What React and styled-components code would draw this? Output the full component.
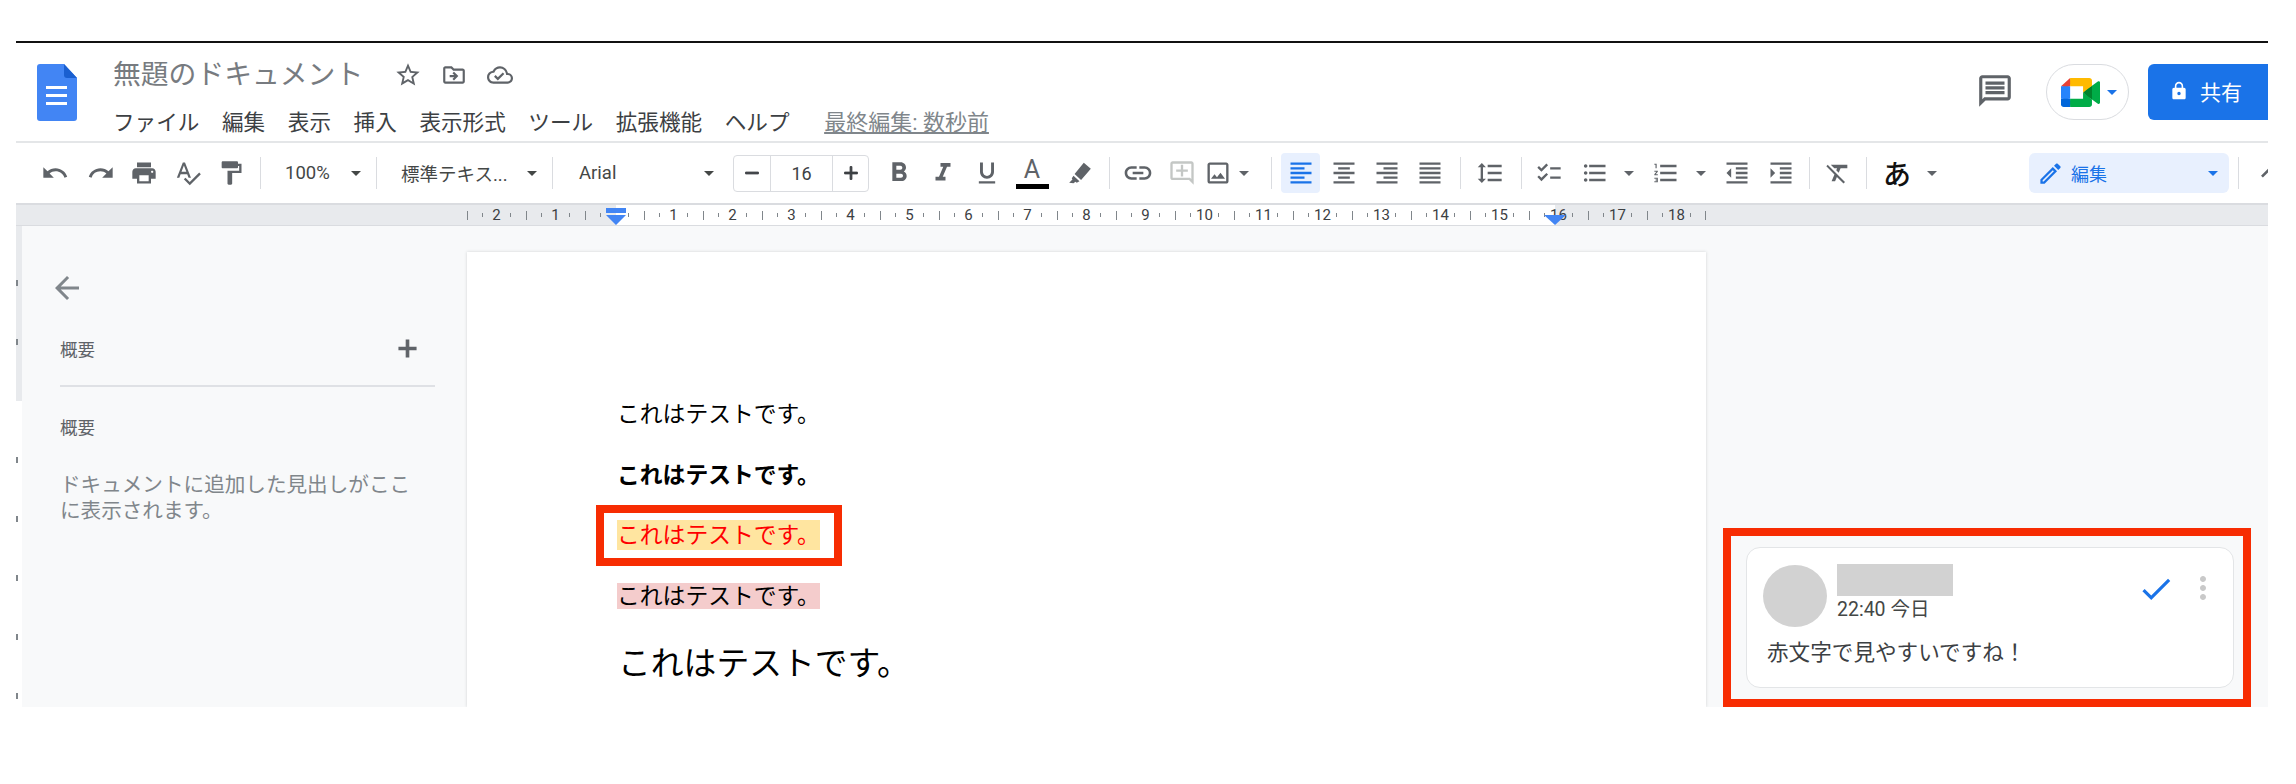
import React from 'react';
import styled, {createGlobalStyle} from 'styled-components';
import {
  MdUndo, MdRedo, MdPrint, MdSpellcheck, MdFormatPaint, MdArrowDropDown, MdRemove, MdAdd,
  MdFormatBold, MdFormatItalic, MdFormatUnderlined, MdLink, MdOutlineAddComment,
  MdOutlineImage, MdFormatAlignLeft, MdFormatAlignCenter, MdFormatAlignRight, MdFormatAlignJustify,
  MdFormatLineSpacing, MdChecklist, MdFormatListBulleted, MdFormatListNumbered,
  MdFormatIndentDecrease, MdFormatIndentIncrease, MdFormatClear, MdOutlineEdit, MdExpandLess,
  MdStarBorder, MdOutlineDriveFileMove, MdOutlineCloudDone, MdOutlineMessage, MdLock,
  MdArrowBack, MdCheck, MdMoreVert,
} from 'react-icons/md';

const UI_FONT = `Roboto, "Noto Sans CJK JP", sans-serif`;
const DOC_FONT = `"Liberation Sans", "Noto Sans CJK JP", sans-serif`;
const ANNOTATION = '#f72c02';

const GlobalStyle = createGlobalStyle`
  html, body {
    margin: 0;
    background: #fff;
    font-family: ${UI_FONT};
  }
  svg {
    flex: none;
  }
`;

const Shell = styled.div`
  margin: 41px 0 0 16px;
  width: 2252px;
  height: 666px;
  border-top: 2px solid #111;
  box-sizing: border-box;
  overflow: hidden;
  display: flex;
  flex-direction: column;
`;

const Header = styled.header`
  height: 100px;
  flex: none;
  display: flex;
  align-items: flex-start;
  padding-left: 21px;
  border-bottom: 2px solid #e4e6e8;
  box-sizing: border-box;
`;

const LogoWrap = styled.div`
  margin-top: 21px;
  width: 40px;
  height: 57px;
  flex: none;
`;

const TitleColumn = styled.div`
  margin-left: 36px;
  padding-top: 16px;
  display: flex;
  flex-direction: column;
`;

const TitleRow = styled.div`
  height: 32px;
  display: flex;
  align-items: center;
  color: #80868b;
`;

const Title = styled.span`
  font-size: 27.8px;
  line-height: 32px;
  color: #777b80;
  margin-right: 22px;
`;

const TitleIcon = styled.span`
  display: flex;
  width: 46px;
  justify-content: center;
  color: #5f6368;
`;

const Menu = styled.nav`
  margin-top: 14px;
  height: 30px;
  display: flex;
  align-items: center;
  gap: 22.6px;
  font-size: 21.6px;
  color: #3c4043;
`;

const LastEdit = styled.span`
  margin-left: 12px;
  font-size: 22px;
  color: #80868b;
  text-decoration: underline;
`;

const HeaderRight = styled.div`
  margin-left: auto;
  padding-top: 21px;
  display: flex;
  align-items: flex-start;
`;

const CommentsIcon = styled.span`
  display: flex;
  margin-top: 8px;
  margin-right: 32px;
  color: #5f6368;
`;

const MeetPill = styled.div`
  width: 83px;
  height: 56px;
  border: 1.5px solid #dadce0;
  border-radius: 28px;
  box-sizing: border-box;
  display: flex;
  align-items: center;
  padding-left: 14px;
  color: #1a73e8;
`;

const ShareButton = styled.button`
  margin-left: 19px;
  width: 120px;
  height: 56px;
  border: 0;
  border-radius: 6px 0 0 6px;
  background: #1a73e8;
  color: #fff;
  font: 21px ${UI_FONT};
  display: flex;
  align-items: center;
  padding: 0 0 2px 21px;
  gap: 11px;
`;

const Toolbar = styled.div`
  height: 60px;
  flex: none;
  display: flex;
  align-items: center;
  padding-left: 16px;
  color: #5f6368;
  overflow: hidden;
`;

const Tool = styled.span`
  flex: none;
  width: ${(p) => p.$w}px;
  height: 40px;
  display: flex;
  align-items: center;
  justify-content: center;
  color: ${(p) => p.$color || 'inherit'};
  background: ${(p) => (p.$active ? '#e8f0fe' : 'transparent')};
  border-radius: 4px;
  margin-left: ${(p) => p.$ml || 0}px;
`;

const Sep = styled.span`
  flex: none;
  width: 1px;
  height: 32px;
  background: #dadce0;
  margin-left: ${(p) => p.$ml || 0}px;
`;

const Select = styled.span`
  flex: none;
  width: ${(p) => p.$w}px;
  height: 40px;
  box-sizing: border-box;
  padding: 0 ${(p) => p.$pr}px 0 ${(p) => p.$pl}px;
  display: flex;
  align-items: center;
  justify-content: space-between;
  font-size: 18.5px;
  color: #444746;
`;

const SizeBox = styled.span`
  flex: none;
  width: 136px;
  height: 37px;
  box-sizing: border-box;
  border: 1px solid #dadce0;
  border-radius: 4px;
  display: grid;
  grid-template-columns: 36px 1fr 36px;
  margin-right: 8px;
  font-size: 18px;
  color: #3c4043;
`;

const SizeCell = styled.span`
  display: flex;
  align-items: center;
  justify-content: center;
  & + & {
    border-left: 1px solid #dadce0;
  }
  & path:not([fill='none']) {
    stroke: currentColor;
    stroke-width: 1px;
  }
`;

const ColorLetter = styled.span`
  display: flex;
  flex-direction: column;
  align-items: center;
  font-size: 25px;
  line-height: 26px;
  color: #5f6368;
  &::after {
    content: '';
    width: 33px;
    height: 5px;
    background: #000;
    margin-top: 1px;
  }
`;

const Kana = styled.span`
  font-size: 28px;
  font-weight: 500;
  color: #111;
`;

const EditButton = styled.span`
  flex: none;
  margin-left: 92px;
  width: 200px;
  height: 40px;
  box-sizing: border-box;
  padding: 0 4px 0 8px;
  display: flex;
  align-items: center;
  background: #e8f0fe;
  border-radius: 6px;
  color: #1a73e8;
  font-size: 18px;
  gap: 7px;
  & > svg:last-child {
    margin-left: auto;
  }
`;

const Ruler = styled.div`
  position: relative;
  height: 23px;
  flex: none;
  background: #e8eaed;
  border-top: 2px solid #dadce0;
  border-bottom: 1px solid #dadce0;
  box-sizing: border-box;
  padding-left: 451px;
`;

const RulerTrack = styled.div`
  width: 1239px;
  height: 100%;
  display: flex;
  background: linear-gradient(90deg, transparent 149px, #fff 149px, #fff 1088px, transparent 1088px);
`;

const RulerCell = styled.div`
  flex: 1;
  display: flex;
  align-items: center;
  justify-content: space-between;
  font-size: 15px;
  color: #3c4043;
`;

const RulerTick = styled.span`
  width: 1px;
  height: ${(p) => (p.$tall ? 9 : 4)}px;
  background: #80868b;
`;

const RulerEnd = styled(RulerTick)`
  visibility: ${(p) => (p.$show ? 'visible' : 'hidden')};
`;

const RulerNum = styled.span`
  width: 0;
  display: flex;
  justify-content: center;
`;

const RulerMarker = styled.svg`
  position: absolute;
  top: ${(p) => p.$top}px;
  left: ${(p) => p.$left}px;
`;

const Main = styled.div`
  flex: 1;
  min-height: 0;
  display: flex;
  background: #f8f9fa;
`;

const SideRuler = styled.div`
  width: 6px;
  flex: none;
  padding-top: 27px;
  box-sizing: border-box;
  background: linear-gradient(180deg, #e8eaed 175px, #fff 175px);
`;

const SideCell = styled.div`
  height: 59px;
  display: flex;
  align-items: center;
  &::before {
    content: '';
    width: 2px;
    height: 6px;
    background: ${(p) => (p.$off ? 'transparent' : '#80868b')};
  }
`;

const Sidebar = styled.aside`
  width: 445px;
  flex: none;
  box-sizing: border-box;
  padding: 44px 32px 0 38px;
  color: #80868b;
`;

const BackIcon = styled.span`
  display: flex;
  margin-left: -11px;
  height: 36px;
`;

const OutlineHead = styled.div`
  margin-top: 30px;
  height: 24px;
  display: flex;
  align-items: center;
  justify-content: space-between;
  padding-right: 13px;
  font-size: 17.5px;
  color: #5f6368;
  & path:not([fill='none']) {
    stroke: currentColor;
    stroke-width: 1px;
  }
`;

const OutlineRule = styled.div`
  margin-top: 25px;
  height: 2px;
  background: #dfe1e5;
`;

const OutlineLabel = styled.div`
  margin-top: 29px;
  font-size: 17.5px;
  line-height: 24px;
  color: #5f6368;
`;

const OutlineHint = styled.p`
  margin: 32px 0 0;
  width: 360px;
  font-size: 20.6px;
  line-height: 26px;
  color: #80868b;
`;

const Page = styled.main`
  width: 1239px;
  flex: none;
  margin-top: 26px;
  background: #fff;
  box-shadow: 0 0 3px rgba(60, 64, 67, 0.2);
  box-sizing: border-box;
  padding: 145px 0 0 150px;
  font-family: ${DOC_FONT};
  color: #000;
`;

const DocLine = styled.p`
  margin: 0 0 ${(p) => p.$gap || 31}px;
  height: 30px;
  display: flex;
  align-items: center;
  font-size: 22.8px;
  font-weight: ${(p) => (p.$bold ? 700 : 400)};
`;

const LargeLine = styled.p`
  margin: 28px 0 0 1px;
  font-size: 32.8px;
  line-height: 44px;
`;

const Mark = styled.span`
  position: relative;
  line-height: ${(p) => p.$h}px;
  color: ${(p) => p.$color || 'inherit'};
  background: ${(p) => p.$bg};
  ${(p) =>
    p.$callout &&
    `&::after {
      content: '';
      position: absolute;
      inset: -15px -22px -16px -21px;
      border: 8px solid ${ANNOTATION};
    }`}
`;

const RightRail = styled.div`
  flex: 1;
  padding: 302px 17px 0;
  min-width: 0;
`;

const Callout = styled.div`
  width: 528px;
  height: 179px;
  box-sizing: border-box;
  border: 8px solid ${ANNOTATION};
  padding: 11px 9px 11px 15px;
`;

const Card = styled.div`
  height: 100%;
  box-sizing: border-box;
  background: #fff;
  border: 1px solid #e3e5e7;
  border-radius: 14px;
  padding: 17px 0 0 16px;
`;

const CardHead = styled.div`
  display: flex;
  align-items: flex-start;
`;

const Avatar = styled.div`
  width: 64px;
  height: 62px;
  border-radius: 50%;
  background: #d2d2d2;
  flex: none;
`;

const Author = styled.div`
  margin-left: 10px;
  margin-top: -1px;
`;

const Redacted = styled.div`
  width: 116px;
  height: 32px;
  background: #d2d2d2;
`;

const Time = styled.div`
  margin-top: 2px;
  font-size: 19.5px;
  line-height: 24px;
  color: #444746;
`;

const CardActions = styled.div`
  margin-left: auto;
  padding: 5px 12px 0 0;
  display: flex;
  gap: 10px;
`;

const CardText = styled.p`
  margin: 11px 0 0 4px;
  font-size: 21.6px;
  line-height: 30px;
  color: #3c4043;
`;

const DocsLogo = () => (
  <svg width="40" height="57" viewBox="0 0 40 57">
    <path fill="#4285f4" d="M3 0h24l13 14v40a3 3 0 0 1-3 3H3a3 3 0 0 1-3-3V3a3 3 0 0 1 3-3z" />
    <path fill="#1a5fd0" d="M27 0l13 14H30a3 3 0 0 1-3-3z" />
    <path fill="#fff" d="M9 22h21v3H9zM9 30h21v3H9zM9 38h21v3H9z" />
  </svg>
);

const MeetLogo = () => (
  <svg width="39" height="29" viewBox="0 0 87.5 72" preserveAspectRatio="none">
    <path fill="#00832d" d="M49.5 36l8.53 9.75 11.47 7.33 2-17.02-2-16.64-11.69 6.44z" />
    <path fill="#0066da" d="M0 51.5V66c0 3.315 2.685 6 6 6h14.5l3-10.96-3-9.54-9.95-3z" />
    <path fill="#e94235" d="M20.5 0L0 20.5l10.55 3 9.95-3 2.95-9.41z" />
    <path fill="#2684fc" d="M20.5 20.5H0v31h20.5z" />
    <path fill="#00ac47" d="M82.6 8.68L69.5 19.42v33.66l13.16 10.79c1.97 1.54 4.85.135 4.85-2.37V11c0-2.535-2.945-3.925-4.91-2.32zM49.5 36v15.5h-29V72h43c3.315 0 6-2.685 6-6V53.08z" />
    <path fill="#ffba00" d="M63.5 0h-43v20.5h29V36l20-16.57V6c0-3.315-2.685-6-6-6z" />
  </svg>
);

const MarkerIcon = () => (
  <svg width="26" height="26" viewBox="0 0 24 24" fill="currentColor">
    <path d="M15.5 2.5L22 8l-9 10.5-6-5.5zM6 14.5l5.5 5-2.5 1.5-1.2-1L6 21.5 2 21l3-3-.6-1.2z" />
  </svg>
);

const MENU = ['ファイル', '編集', '表示', '挿入', '表示形式', 'ツール', '拡張機能', 'ヘルプ'];
const RULER_NUMBERS = [2, 1, null, 1, 2, 3, 4, 5, 6, 7, 8, 9, 10, 11, 12, 13, 14, 15, 16, 17, 18];
const SIDE_TICKS = [false, false, true, false, false, false, false, false];
const ICON = 28;
const CARET = 24;

const AppHeader = () => (
  <Header>
    <LogoWrap>
      <DocsLogo />
    </LogoWrap>
    <TitleColumn>
      <TitleRow>
        <Title>無題のドキュメント</Title>
        <TitleIcon>
          <MdStarBorder size={28} />
        </TitleIcon>
        <TitleIcon>
          <MdOutlineDriveFileMove size={26} />
        </TitleIcon>
        <TitleIcon>
          <MdOutlineCloudDone size={26} />
        </TitleIcon>
      </TitleRow>
      <Menu>
        {MENU.map((item) => (
          <span key={item}>{item}</span>
        ))}
        <LastEdit>最終編集: 数秒前</LastEdit>
      </Menu>
    </TitleColumn>
    <HeaderRight>
      <CommentsIcon>
        <MdOutlineMessage size={38} />
      </CommentsIcon>
      <MeetPill>
        <MeetLogo />
        <MdArrowDropDown size={24} />
      </MeetPill>
      <ShareButton>
        <MdLock size={20} />
        共有
      </ShareButton>
    </HeaderRight>
  </Header>
);

const AppToolbar = () => (
  <Toolbar>
    <Tool $w={46}><MdUndo size={ICON} /></Tool>
    <Tool $w={46}><MdRedo size={ICON} /></Tool>
    <Tool $w={40}><MdPrint size={ICON} /></Tool>
    <Tool $w={48}><MdSpellcheck size={ICON} /></Tool>
    <Tool $w={38}><MdFormatPaint size={ICON} /></Tool>
    <Sep $ml={10} />
    <Select $w={115} $pl={24} $pr={8}>100%<MdArrowDropDown size={CARET} /></Select>
    <Sep />
    <Select $w={175} $pl={24} $pr={8}>標準テキス...<MdArrowDropDown size={CARET} /></Select>
    <Sep />
    <Select $w={180} $pl={26} $pr={12}>Arial<MdArrowDropDown size={CARET} /></Select>
    <SizeBox>
      <SizeCell><MdRemove size={22} /></SizeCell>
      <SizeCell>16</SizeCell>
      <SizeCell><MdAdd size={22} /></SizeCell>
    </SizeBox>
    <Tool $w={44}><MdFormatBold size={ICON + 4} /></Tool>
    <Tool $w={44}><MdFormatItalic size={ICON + 2} /></Tool>
    <Tool $w={44}><MdFormatUnderlined size={ICON} /></Tool>
    <Tool $w={46}><ColorLetter>A</ColorLetter></Tool>
    <Tool $w={50}><MarkerIcon /></Tool>
    <Sep $ml={4} />
    <Tool $w={56}><MdLink size={ICON + 4} /></Tool>
    <Tool $w={32} $color="#c4c7c5"><MdOutlineAddComment size={ICON} /></Tool>
    <Tool $w={64}><MdOutlineImage size={ICON} /><MdArrowDropDown size={CARET} /></Tool>
    <Sep $ml={9} />
    <Tool $w={39} $ml={9} $active $color="#1a73e8"><MdFormatAlignLeft size={ICON} /></Tool>
    <Tool $w={48}><MdFormatAlignCenter size={ICON} /></Tool>
    <Tool $w={38}><MdFormatAlignRight size={ICON} /></Tool>
    <Tool $w={48}><MdFormatAlignJustify size={ICON} /></Tool>
    <Sep $ml={6} />
    <Tool $w={58}><MdFormatLineSpacing size={ICON} /></Tool>
    <Sep $ml={2} />
    <Tool $w={54}><MdChecklist size={ICON} /></Tool>
    <Tool $w={38}><MdFormatListBulleted size={ICON} /></Tool>
    <Tool $w={30}><MdArrowDropDown size={CARET} /></Tool>
    <Tool $w={44}><MdFormatListNumbered size={ICON} /></Tool>
    <Tool $w={26}><MdArrowDropDown size={CARET} /></Tool>
    <Tool $w={46}><MdFormatIndentDecrease size={ICON} /></Tool>
    <Tool $w={42}><MdFormatIndentIncrease size={ICON} /></Tool>
    <Sep $ml={7} />
    <Tool $w={56}><MdFormatClear size={ICON} /></Tool>
    <Sep />
    <Tool $w={60}><Kana>あ</Kana></Tool>
    <Tool $w={10}><MdArrowDropDown size={CARET} /></Tool>
    <EditButton>
      <MdOutlineEdit size={27} />
      編集
      <MdArrowDropDown size={CARET} />
    </EditButton>
    <Sep $ml={9} />
    <Tool $w={40} $ml={10}><MdExpandLess size={32} /></Tool>
  </Toolbar>
);

const AppRuler = () => (
  <Ruler>
    <RulerTrack>
      {RULER_NUMBERS.map((n, i) => (
        <RulerCell key={i}>
          <RulerTick $tall />
          <RulerTick />
          <RulerNum>{n}</RulerNum>
          <RulerTick />
          <RulerEnd $tall $show={i === RULER_NUMBERS.length - 1} />
        </RulerCell>
      ))}
    </RulerTrack>
    <RulerMarker $top={3} $left={590} width="20" height="17" viewBox="0 0 20 17">
      <path fill="#4285f4" d="M0 0h20v5H0zM0 7h20L10 17z" />
    </RulerMarker>
    <RulerMarker $top={10} $left={1528} width="22" height="10" viewBox="0 0 22 10">
      <path fill="#4285f4" d="M0 0h22L11 10z" />
    </RulerMarker>
  </Ruler>
);

const Outline = () => (
  <Sidebar>
    <BackIcon>
      <MdArrowBack size={36} />
    </BackIcon>
    <OutlineHead>
      概要
      <MdAdd size={29} />
    </OutlineHead>
    <OutlineRule />
    <OutlineLabel>概要</OutlineLabel>
    <OutlineHint>ドキュメントに追加した見出しがここに表示されます。</OutlineHint>
  </Sidebar>
);

const CommentCard = () => (
  <Callout>
    <Card>
      <CardHead>
        <Avatar />
        <Author>
          <Redacted />
          <Time>22:40 今日</Time>
        </Author>
        <CardActions>
          <MdCheck size={38} color="#1a73e8" />
          <MdMoreVert size={36} color="#c9c9c9" />
        </CardActions>
      </CardHead>
      <CardText>赤文字で見やすいですね！</CardText>
    </Card>
  </Callout>
);

const App = () => (
  <>
    <GlobalStyle />
    <Shell>
      <AppHeader />
      <AppToolbar />
      <AppRuler />
      <Main>
        <SideRuler>
          {SIDE_TICKS.map((off, i) => (
            <SideCell key={i} $off={off} />
          ))}
        </SideRuler>
        <Outline />
        <Page>
          <DocLine>これはテストです。</DocLine>
          <DocLine $bold $gap={32}>これはテストです。</DocLine>
          <DocLine>
            <Mark $h={30} $bg="#ffe5a0" $color="#ff0000" $callout>
              これはテストです。
            </Mark>
          </DocLine>
          <DocLine>
            <Mark $h={26} $bg="#f4cccc">
              これはテストです。
            </Mark>
          </DocLine>
          <LargeLine>これはテストです。</LargeLine>
        </Page>
        <RightRail>
          <CommentCard />
        </RightRail>
      </Main>
    </Shell>
  </>
);

export default App;
